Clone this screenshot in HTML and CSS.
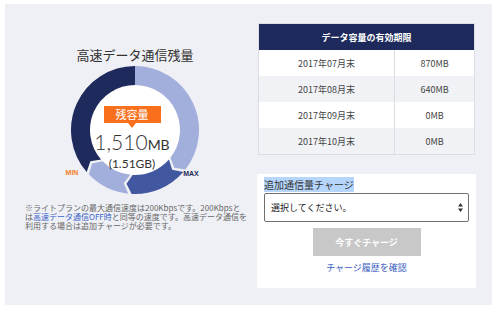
FILE: index.html
```html
<!DOCTYPE html>
<html lang="ja">

<head>
    <meta charset="utf-8">
    <meta name="viewport" content="width=device-width, initial-scale=1">
    <title>データ通信残量</title>
    <link rel="stylesheet" href="styles.css">
</head>

<body>
    <div class="panel">
        <div class="usage">
            <h2 class="usage-title">高速データ通信残量</h2>

            <div class="gauge">
                <svg width="150" height="134" viewBox="0 3 150 134">
                    <circle cx="75" cy="70" r="45" fill="#ffffff" />
                    <path fill="#a2aedb" d="M75 6 A64 64 0 0 1 125.43 109.40 L114.20 107.86 L110.46 97.71 A45 45 0 0 0 75 25 Z" />
                    <path fill="#41579f" d="M123.30 111.99 A64 64 0 0 1 71.65 133.91 L66.48 123.83 L72.65 114.94 A45 45 0 0 0 108.96 99.52 L112.17 109.86 Z" />
                    <path fill="#a2aedb" d="M68.31 133.65 A64 64 0 0 1 28.96 114.46 L32.05 103.56 L42.63 101.26 A45 45 0 0 0 70.30 114.75 L63.67 123.31 Z" />
                    <path fill="#1d2a5b" d="M26.70 111.99 A64 64 0 0 1 75 6 L75 25 A45 45 0 0 0 41.04 99.52 L30.35 101.26 Z" />
                    <text x="12" y="115" class="gauge-min" text-anchor="middle">MIN</text>
                    <text x="131" y="116" class="gauge-max" text-anchor="middle">MAX</text>
                </svg>
                <div class="gauge-center">
                    <div class="badge">残容量</div>
                    <div class="amount">1,510<small>MB</small></div>
                    <div class="amount-gb">(1.51GB)</div>
                </div>
            </div>

            <p class="note">
                ※ライトプランの最大通信速度は200Kbpsです。200Kbpsと<br>
                は<a href="#">高速データ通信OFF時</a>と同等の速度です。高速データ通信を<br>
                利用する場合は追加チャージが必要です。
            </p>
        </div>

        <div class="side">
            <table class="expire">
                <thead>
                    <tr>
                        <th colspan="2">データ容量の有効期限</th>
                    </tr>
                </thead>
                <tbody>
                    <tr>
                        <td>2017年07月末</td>
                        <td>870MB</td>
                    </tr>
                    <tr>
                        <td>2017年08月末</td>
                        <td>640MB</td>
                    </tr>
                    <tr>
                        <td>2017年09月末</td>
                        <td>0MB</td>
                    </tr>
                    <tr>
                        <td>2017年10月末</td>
                        <td>0MB</td>
                    </tr>
                </tbody>
            </table>

            <div class="charge">
                <p class="charge-label"><span>追加通信量チャージ</span></p>
                <div class="select-box">
                    <span>選択してください。</span>
                    <svg width="5" height="9" viewBox="0 0 5 9">
                        <path d="M2.5 0 L5 3.5 L0 3.5 Z M2.5 9 L5 5.5 L0 5.5 Z" fill="#333333" />
                    </svg>
                </div>
                <button type="button" class="charge-btn">今すぐチャージ</button>
                <a href="#" class="history">チャージ履歴を確認</a>
            </div>
        </div>
    </div>
</body>

</html>
```

FILE: styles.css
```css
body {
    margin: 0;
    background-color: #ffffff;
    font-family: "Noto Sans CJK JP", sans-serif;
    color: #333333;
}

.panel {
    display: flex;
    gap: 12px;
    height: 301px;
    box-sizing: border-box;
    margin: 4px 8px 7px 5px;
    padding: 19px 16px 0 20px;
    background-color: #eff0f5;
}

.usage {
    width: 220px;
    display: flex;
    flex-direction: column;
    align-items: center;
}

.usage-title {
    margin: 24px 0 0;
    font-size: 13px;
    font-weight: normal;
    line-height: 16px;
    color: #333333;
}

.gauge {
    position: relative;
    width: 150px;
    height: 134px;
}

.gauge svg {
    display: block;
}

.gauge-min,
.gauge-max {
    font-family: "Liberation Sans", sans-serif;
    font-size: 7px;
    font-weight: bold;
}

.gauge-min {
    fill: #f5812a;
}

.gauge-max {
    fill: #1d2a5b;
}

.gauge-center {
    position: absolute;
    top: 37px;
    left: 0;
    width: 144px;
    text-align: center;
}

.badge {
    position: relative;
    display: inline-block;
    width: 57px;
    background-color: #f8701d;
    color: #ffffff;
    font-size: 11px;
    line-height: 17px;
}

.badge::after {
    content: "";
    position: absolute;
    left: 50%;
    bottom: -5px;
    margin-left: -4px;
    border-left: 4px solid transparent;
    border-right: 4px solid transparent;
    border-top: 5px solid #f8701d;
}

.amount {
    margin-top: 6px;
    font-family: Lato, Roboto, sans-serif;
    font-weight: 300;
    font-size: 21px;
    line-height: 24px;
    color: #333333;
}

.amount small {
    font-size: 14px;
    font-weight: 400;
}

.amount-gb {
    font-family: Lato, Roboto, sans-serif;
    font-size: 12px;
    line-height: 14px;
    color: #333333;
}

.note {
    align-self: stretch;
    margin: 6px 0 0;
    font-size: 8px;
    line-height: 9px;
    color: #666666;
    white-space: nowrap;
}

.note a {
    color: #3b63c9;
    text-decoration: none;
}

.side {
    width: 219px;
}

.expire {
    width: 217px;
    margin-left: 1px;
    border-collapse: collapse;
    border: 1px solid #dcdde3;
    background-color: #ffffff;
}

.expire th {
    height: 26px;
    padding: 0;
    background-color: #1d2a5b;
    color: #ffffff;
    font-size: 9px;
    font-weight: bold;
}

.expire td {
    height: 26px;
    padding: 0;
    text-align: center;
    font-size: 9px;
    color: #444444;
}

.expire td:first-child {
    width: 135px;
}

.expire td + td {
    border-left: 1px solid #dcdde3;
}

.expire tbody tr:nth-child(even) td {
    background-color: #f1f2f6;
}

.charge {
    margin-top: 19px;
    padding: 5px 7px 14px;
    background-color: #ffffff;
}

.charge-label {
    margin: 0 0 2px;
    font-size: 10px;
    line-height: 12px;
}

.charge-label span {
    background-color: #b5d5fb;
}

.select-box {
    display: flex;
    justify-content: space-between;
    align-items: center;
    height: 29px;
    box-sizing: border-box;
    padding: 0 5px 0 6px;
    border: 1px solid #707070;
    border-radius: 2px;
    font-size: 9px;
    color: #222222;
}

.charge-btn {
    display: block;
    width: 108px;
    height: 28px;
    margin: 6px auto 0;
    border: none;
    background-color: #c8c8c8;
    color: #ffffff;
    font-family: inherit;
    font-size: 9px;
    font-weight: bold;
}

.history {
    display: block;
    margin-top: 6px;
    text-align: center;
    font-size: 9px;
    line-height: 12px;
    color: #3b5cbf;
    text-decoration: none;
}
```
